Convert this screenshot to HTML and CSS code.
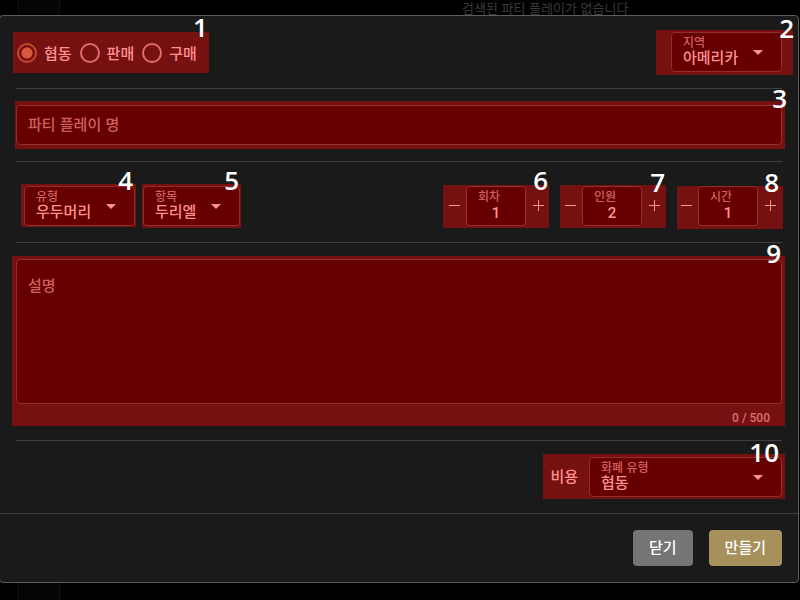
FILE: index.html
```html
<!DOCTYPE html>
<html lang="ko">
<head>
<meta charset="utf-8">
<title>파티 플레이</title>
<link rel="stylesheet" href="styles.css">
</head>
<body>
<div class="backdrop"><div class="rail"></div><p class="empty">검색된 파티 플레이가 없습니다</p></div>
<form class="dialog">
  <div class="row">
    <div class="mark mark-1 radios" role="radiogroup" aria-label="1">
      <label class="radio"><input type="radio" name="kind" checked>협동</label>
      <label class="radio"><input type="radio" name="kind">판매</label>
      <label class="radio"><input type="radio" name="kind">구매</label>
      <span class="badge">1</span>
    </div>
    <div class="mark mark-2 push">
      <div class="field">
        <label for="region">지역</label>
        <select id="region"><option>아메리카</option></select>
        <svg class="caret" viewBox="0 0 10 5"><path d="M0 0h10L5 5z"/></svg>
      </div>
      <span class="badge">2</span>
    </div>
  </div>
  <div class="row">
    <div class="mark mark-3 grow">
      <div class="field"><input class="text" type="text" placeholder="파티 플레이 명" aria-label="파티 플레이 명"></div>
      <span class="badge">3</span>
    </div>
  </div>
  <div class="row options">
    <div class="mark mark-4">
      <div class="field">
        <label for="type">유형</label>
        <select id="type"><option>우두머리</option></select>
        <svg class="caret" viewBox="0 0 10 5"><path d="M0 0h10L5 5z"/></svg>
      </div>
      <span class="badge">4</span>
    </div>
    <div class="mark mark-5">
      <div class="field">
        <label for="item">항목</label>
        <select id="item"><option>두리엘</option></select>
        <svg class="caret" viewBox="0 0 10 5"><path d="M0 0h10L5 5z"/></svg>
      </div>
      <span class="badge">5</span>
    </div>
    <div class="mark mark-6 stepper push">
      <button type="button" class="step" aria-label="−"><svg viewBox="0 0 12 12"><path d="M1 5.5h11"/></svg></button>
      <div class="field"><label for="rounds">회차</label><input id="rounds" class="number" type="text" value="1"></div>
      <button type="button" class="step" aria-label="+"><svg viewBox="0 0 12 12"><path d="M1 5.5h11M6.5 0v11"/></svg></button>
      <span class="badge">6</span>
    </div>
    <div class="mark mark-7 stepper">
      <button type="button" class="step" aria-label="−"><svg viewBox="0 0 12 12"><path d="M1 5.5h11"/></svg></button>
      <div class="field"><label for="people">인원</label><input id="people" class="number" type="text" value="2"></div>
      <button type="button" class="step" aria-label="+"><svg viewBox="0 0 12 12"><path d="M1 5.5h11M6.5 0v11"/></svg></button>
      <span class="badge">7</span>
    </div>
    <div class="mark mark-8 stepper">
      <button type="button" class="step" aria-label="−"><svg viewBox="0 0 12 12"><path d="M1 5.5h11"/></svg></button>
      <div class="field"><label for="hours">시간</label><input id="hours" class="number" type="text" value="1"></div>
      <button type="button" class="step" aria-label="+"><svg viewBox="0 0 12 12"><path d="M1 5.5h11M6.5 0v11"/></svg></button>
      <span class="badge">8</span>
    </div>
  </div>
  <div class="row description">
    <div class="mark mark-9 grow">
      <textarea rows="5" placeholder="설명" aria-label="설명"></textarea>
      <div class="counter">0 / 500</div>
      <span class="badge">9</span>
    </div>
  </div>
  <div class="row cost-row">
    <div class="mark mark-10 cost push">
      <span>비용</span>
      <div class="field">
        <label for="currency">화폐 유형</label>
        <select id="currency"><option>협동</option></select>
        <svg class="caret" viewBox="0 0 10 5"><path d="M0 0h10L5 5z"/></svg>
      </div>
      <span class="badge">10</span>
    </div>
  </div>
  <footer class="actions">
    <button type="button" class="action">닫기</button>
    <button type="submit" class="action primary">만들기</button>
  </footer>
</form>
</body>
</html>
```
FILE: styles.css
```css
:root {
  --panel: #1a1a1a;
  --rule: #3f3f3f;
  --mark: #761111;
  --field: #660000;
  --outline: #912f2f;
  --text: #ff9090;
  --muted: #cf6060;
}
* { box-sizing: border-box; }
body {
  margin: 0;
  padding-top: 15px;
  min-height: 100vh;
  background: #000;
  color: var(--text);
  font: 500 15px/20px "Noto Sans CJK KR", sans-serif;
  overflow: hidden;
}
input, select, textarea, button { font: inherit; color: inherit; margin: 0; }

.backdrop { position: absolute; inset: 0; z-index: -1; }
.rail {
  width: 42px;
  height: 100%;
  margin-left: 18px;
  background: #050505;
  border: solid #121212;
  border-width: 0 1px;
}
.empty {
  position: absolute;
  top: 0;
  left: 462px;
  margin: 0;
  color: #3a3a3a;
  font-size: 13px;
  line-height: 16px;
  font-weight: 400;
  white-space: nowrap;
}

.dialog {
  margin: 0 1px 0 -1px;
  background: var(--panel);
  border: 1px solid #5c5c5c;
  border-radius: 4px;
}
.row {
  display: flex;
  align-items: center;
  gap: 8px;
  margin: 0 16px;
  padding: 16px 0;
  border-bottom: 1px solid var(--rule);
}
.options { padding: 24px 0 16px 8px; }
.description { padding-bottom: 14px; }
.cost-row { margin: 0; padding: 16px; }
.push { margin-left: auto; }
.grow { flex: 1; }

.mark { position: relative; isolation: isolate; }
.mark::before {
  content: "";
  position: absolute;
  z-index: -1;
  background: var(--mark);
}
.badge {
  position: absolute;
  top: -19px;
  color: #fff;
  font: 600 26px/26px "Open Sans", sans-serif;
}
.mark-1::before { inset: 0 -12px -1px -3px; }
.mark-2::before { inset: -2px -11px -3px -15px; }
.mark-3::before { inset: -4px -3px -4px -1px; }
.mark-4::before { inset: -2px -1px -1px -3px; }
.mark-5::before { inset: -2px -1px -2px -1px; }
.mark-6::before { inset: -1px 1px -2px 1px; }
.mark-7::before { inset: -1px 0 -2px 2px; }
.mark-8::before { inset: 0 -1px -3px 3px; }
.mark-9::before { inset: -3px -3px 0 -4px; }
.mark-10::before { inset: -3px -3px -2px -7px; }
.mark-1 .badge { top: -18px; right: -11px; }
.mark-2 .badge { top: -17px; right: -12px; }
.mark-3 .badge { top: -20px; right: -5px; }
.mark-4 .badge { right: 2px; }
.mark-5 .badge { right: 1px; }
.mark-6 .badge { right: 2px; }
.mark-7 .badge { top: -17px; right: 1px; }
.mark-8 .badge { top: -17px; right: 3px; }
.mark-9 .badge { right: 1px; }
.mark-10 .badge { top: -18px; right: 3px; }

.radios { display: flex; align-items: center; gap: 8px; height: 40px; padding: 2px 0 0 1px; }
.radio { display: flex; align-items: center; gap: 7px; }
.radio input {
  appearance: none;
  width: 20px;
  height: 20px;
  border: 2px solid #e06c6c;
  border-radius: 50%;
}
.radio input:checked {
  border-color: #c0492f;
  background: radial-gradient(circle, #d8583f 5px, transparent 6px);
}

.field {
  position: relative;
  height: 40px;
  background: var(--field);
  border: 1px solid var(--outline);
  border-radius: 4px;
}
.field label {
  position: absolute;
  top: 1px;
  left: 11px;
  color: var(--muted);
  font-size: 12px;
  line-height: 16px;
  pointer-events: none;
}
.field select, .field input {
  display: block;
  width: 100%;
  height: 38px;
  padding: 10px 42px 0 11px;
  appearance: none;
  background: none;
  border: 0;
  outline: 0;
}
.field .text { padding: 0 11px 4px; }
::placeholder { color: var(--muted); opacity: 1; }
.caret {
  position: absolute;
  top: 17px;
  right: 18px;
  width: 10px;
  height: 5px;
  fill: var(--text);
  pointer-events: none;
}

.stepper { display: flex; }
.stepper .field { width: 60px; }
.field .number {
  padding: 14px 0 0;
  text-align: center;
  font-family: Roboto, "Noto Sans CJK KR", sans-serif;
}
.step { width: 24px; padding: 0; background: none; border: 0; display: grid; place-items: center; }
.step svg { width: 12px; height: 12px; fill: none; stroke: var(--text); }

textarea {
  display: block;
  width: 100%;
  height: 145px;
  padding: 15px 11px;
  resize: none;
  background: var(--field);
  border: 1px solid var(--outline);
  border-radius: 4px;
  outline: 0;
}
.counter {
  padding: 6px 12px 0;
  text-align: right;
  color: #d26a6a;
  font: 600 12px/16px Roboto, sans-serif;
}

.cost { display: flex; align-items: center; gap: 11px; }
.cost > span { padding-bottom: 2px; }
.cost .field { width: 193px; }

.actions { display: flex; justify-content: flex-end; gap: 16px; padding: 16px; }
.action {
  height: 36px;
  padding: 0 16px 2px;
  background: #757575;
  color: #fff;
  border: 0;
  border-radius: 4px;
}
.primary { background: #a6905b; }
```
